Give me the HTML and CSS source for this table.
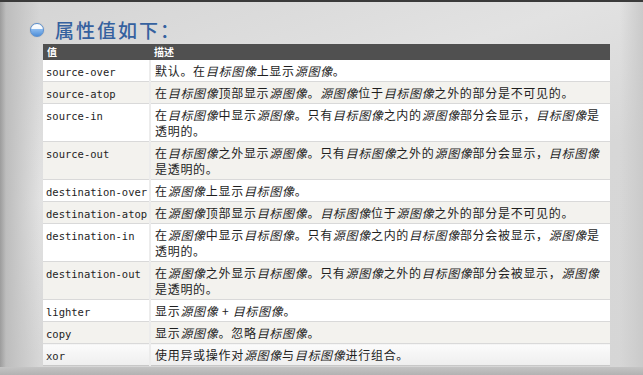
FILE: index.html
```html
<!DOCTYPE html>
<html lang="zh">
<head>
<meta charset="utf-8">
<title>属性值如下</title>
<link rel="stylesheet" href="styles.css">
</head>
<body>
<div class="slide">
  <div class="title">
    <span class="bullet"></span>
    <h1 class="heading">属性值如下：</h1>
  </div>
  <table class="props">
    <colgroup><col class="c1"><col class="c2"></colgroup>
    <thead>
      <tr><th>值</th><th>描述</th></tr>
    </thead>
    <tbody>
      <tr><td class="v">source-over</td><td class="d">默认。在<i>目标图像</i>上显示<i>源图像</i>。</td></tr>
      <tr class="alt"><td class="v">source-atop</td><td class="d">在<i>目标图像</i>顶部显示<i>源图像</i>。<i>源图像</i>位于<i>目标图像</i>之外的部分是不可见的。</td></tr>
      <tr><td class="v">source-in</td><td class="d">在<i>目标图像</i>中显示<i>源图像</i>。只有<i>目标图像</i>之内的<i>源图像</i>部分会显示，<i>目标图像</i>是透明的。</td></tr>
      <tr class="alt"><td class="v">source-out</td><td class="d">在<i>目标图像</i>之外显示<i>源图像</i>。只有<i>目标图像</i>之外的<i>源图像</i>部分会显示，<i>目标图像</i>是透明的。</td></tr>
      <tr><td class="v">destination-over</td><td class="d">在<i>源图像</i>上显示<i>目标图像</i>。</td></tr>
      <tr class="alt"><td class="v">destination-atop</td><td class="d">在<i>源图像</i>顶部显示<i>目标图像</i>。<i>目标图像</i>位于<i>源图像</i>之外的部分是不可见的。</td></tr>
      <tr><td class="v">destination-in</td><td class="d">在<i>源图像</i>中显示<i>目标图像</i>。只有<i>源图像</i>之内的<i>目标图像</i>部分会被显示，<i>源图像</i>是透明的。</td></tr>
      <tr class="alt"><td class="v">destination-out</td><td class="d">在<i>源图像</i>之外显示<i>目标图像</i>。只有<i>源图像</i>之外的<i>目标图像</i>部分会被显示，<i>源图像</i>是透明的。</td></tr>
      <tr><td class="v">lighter</td><td class="d">显示<i>源图像</i> + <i>目标图像</i>。</td></tr>
      <tr class="alt"><td class="v">copy</td><td class="d">显示<i>源图像</i>。忽略<i>目标图像</i>。</td></tr>
      <tr class="last"><td class="v">xor</td><td class="d">使用异或操作对<i>源图像</i>与<i>目标图像</i>进行组合。</td></tr>
    </tbody>
  </table>
  <div class="foot"></div>
</div>
</body>
</html>
```

FILE: styles.css
```css
html, body {
  margin: 0;
  padding: 0;
}
body {
  width: 643px;
  height: 375px;
  overflow: hidden;
  font-family: "Noto Sans CJK SC", sans-serif;
}
.slide {
  box-sizing: border-box;
  width: 643px;
  height: 375px;
  display: flex;
  flex-direction: column;
  border-top: 2px solid #3a3a3a;
  background:
    linear-gradient(90deg, #9c9c9c 0px, #bdbdbd 6px, rgba(200,200,200,0) 40px),
    linear-gradient(90deg, rgba(0,0,0,0) 620px, #cacaca 643px),
    linear-gradient(160deg, #d4d4d4 0%, #e2e2e2 35%, #d7d7d7 60%, #d6d6d6 100%);
}
.title {
  box-sizing: border-box;
  flex: none;
  height: 42px;
  padding: 14px 0 0 30px;
  display: flex;
  align-items: center;
  gap: 11px;
}
.bullet {
  width: 14px;
  height: 14px;
  border-radius: 50%;
  box-sizing: border-box;
  border: 1px solid #5a8fd0;
  background: linear-gradient(180deg, #ffffff 0%, #f4f8fd 38%, #8dbcf0 42%, #4f8fd8 100%);
  box-shadow: 0 0 1px rgba(0,0,0,0.3);
}
.heading {
  margin: 0;
  font-family: "Noto Sans CJK SC", sans-serif;
  font-weight: 500;
  font-size: 19px;
  line-height: 24px;
  letter-spacing: 2px;
  color: #35619f;
}
.props {
  flex: none;
  margin-left: 43px;
  width: 567px;
  table-layout: fixed;
  border-collapse: collapse;
  background: #ffffff;
}
.c1 { width: 107px; }
.c2 { width: 460px; }
.props th {
  height: 16px;
  padding: 0 4px;
  background: #505050;
  color: #ffffff;
  font-size: 10px;
  line-height: 16px;
  font-weight: 700;
  text-align: left;
}
.props td {
  padding: 3px 10px 2px 3px;
  border-bottom: 1px solid #d9d9d9;
  vertical-align: top;
  line-height: 16px;
  color: #1e1e1e;
}
.props td.v {
  border-right: 2px solid #ececec;
  font-family: "DejaVu Sans Mono", monospace;
  font-size: 10.5px;
  white-space: nowrap;
  padding-right: 0;
  padding-top: 4px;
  padding-bottom: 1px;
}
.props td.d {
  font-family: "Noto Sans CJK SC", sans-serif;
  font-size: 12px;
  letter-spacing: 0.7px;
  padding-left: 4px;
}
.props td.d i {
  font-style: italic;
}
.props tr.alt td {
  background: #f3f2ee;
}
.props tr.last td {
  background: linear-gradient(180deg, #fbfbfb, #eeeeee);
  border-bottom: 1px solid #c8c8c8;
}
.foot {
  flex: 1;
  margin-top: 1px;
  background: linear-gradient(180deg, #c4c4c4, #b2b2b2);
}
```
